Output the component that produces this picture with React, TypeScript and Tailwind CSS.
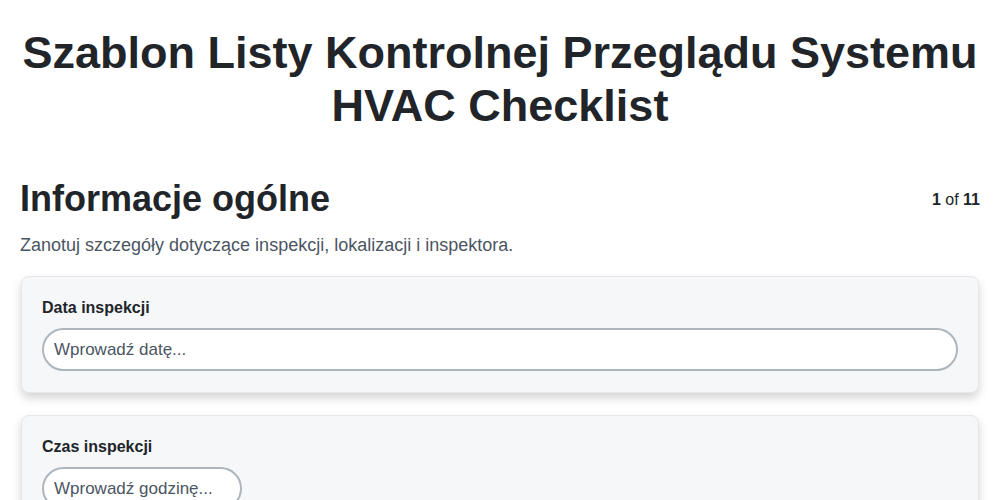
import React from 'react';

const fields = [
    { label: "Data inspekcji", placeholder: "Wprowadź datę...", width: "w-full" },
    { label: "Czas inspekcji", placeholder: "Wprowadź godzinę...", width: "w-[200px]" },
    { label: "Lokalizacja", placeholder: "Wprowadź adres...", width: "w-full" },
];

const App: React.FC = () => {
    return (
        <div className="min-h-screen bg-white text-[#212529] font-['Liberation_Sans',Arial,sans-serif]">
            <div className="px-5 pt-[26px]">
                <h1 className="text-center text-[45px] leading-[53px] font-bold">
                    Szablon Listy Kontrolnej Przeglądu Systemu HVAC Checklist
                </h1>

                <div className="mt-[45px] flex items-start justify-between">
                    <h2 className="text-4xl font-bold leading-[44px]">Informacje ogólne</h2>
                    <span className="mt-[11px] text-base leading-6">
                        <b>1</b> of <b>11</b>
                    </span>
                </div>
                <p className="mt-[10px] text-lg leading-7 text-[#4b5563]">
                    Zanotuj szczegóły dotyczące inspekcji, lokalizacji i inspektora.
                </p>

                <div className="mt-[17px] flex flex-col gap-[22px]">
                    {fields.map((f) => (
                        <div
                            key={f.label}
                            className="mx-px rounded-lg border border-[#e5e7eb] bg-[#f6f7f9] px-5 pt-[19px] pb-[21px] shadow-[0_5px_10px_rgba(0,0,0,0.17)]"
                        >
                            <label className="mb-2 block text-base font-bold leading-6">{f.label}</label>
                            <input
                                type="text"
                                placeholder={f.placeholder}
                                className={`${f.width} h-[43px] rounded-full border-2 border-[#adb5bd] bg-white px-[10px] text-[17px] text-[#212529] placeholder:text-[#4b5563] outline-none`}
                            />
                        </div>
                    ))}
                </div>
            </div>
        </div>
    );
};

export default App;
